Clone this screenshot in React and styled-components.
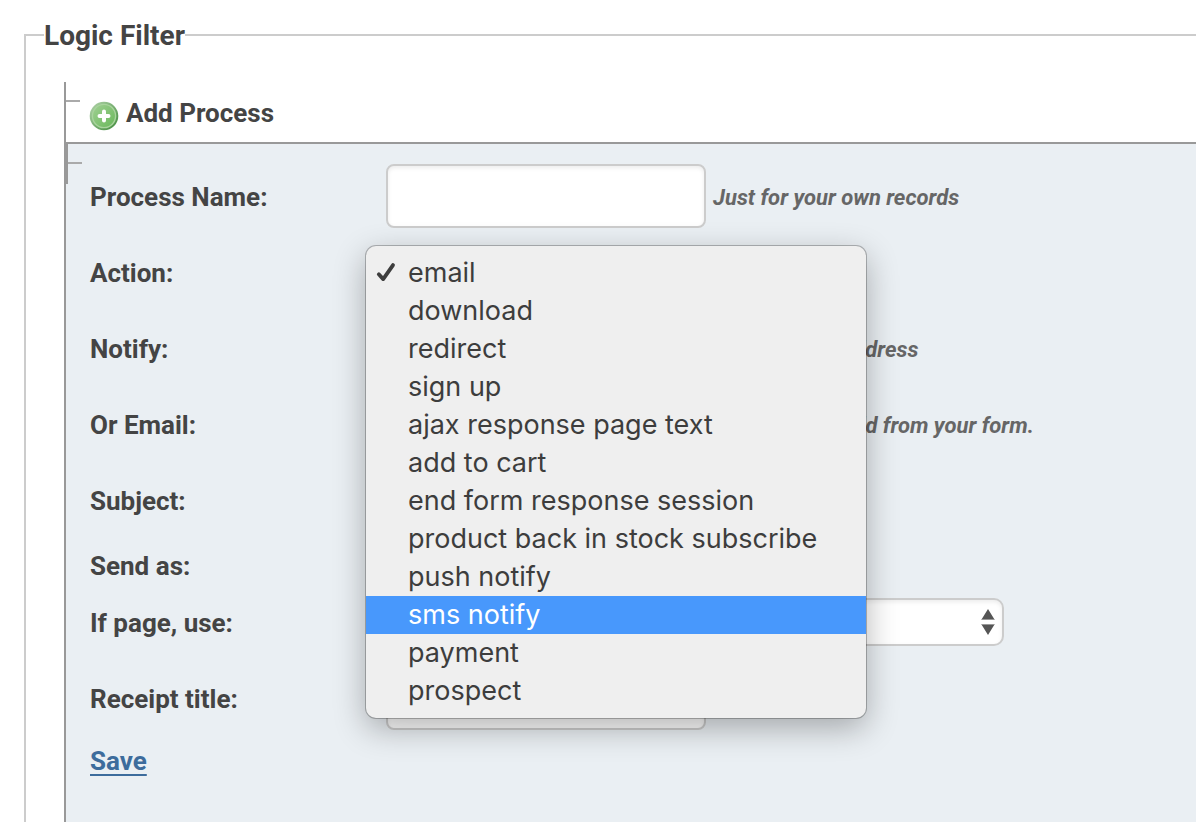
import { useState } from "react";
import styled, { createGlobalStyle } from "styled-components";

const actions = [
  "email",
  "download",
  "redirect",
  "sign up",
  "ajax response page text",
  "add to cart",
  "end form response session",
  "product back in stock subscribe",
  "push notify",
  "sms notify",
  "payment",
  "prospect",
];

const App = () => {
  const [action, setAction] = useState("email");
  const [active, setActive] = useState("sms notify");
  return (
    <Page>
      <GlobalStyle />
      <Filter>
        <Legend>Logic Filter</Legend>
        <Tree>
          <TreeHeader>
            <AddButton type="button">
              <AddIcon />
              Add Process
            </AddButton>
          </TreeHeader>
          <Panel>
            <Branch />
            <Row>
              <Label htmlFor="name">Process Name:</Label>
              <TextInput id="name" type="text" />
              <Hint>Just for your own records</Hint>
            </Row>
            <Row>
              <Label htmlFor="action">Action:</Label>
              <ActionField>
                <Select
                  id="action"
                  value={action}
                  onChange={(e) => setAction(e.target.value)}
                >
                  {actions.map((name) => (
                    <option key={name}>{name}</option>
                  ))}
                </Select>
                <Menu role="listbox" aria-label="Action">
                  {actions.map((name) => (
                    <MenuItem
                      key={name}
                      type="button"
                      role="option"
                      aria-selected={name === action}
                      $active={name === active}
                      onMouseEnter={() => setActive(name)}
                      onClick={() => setAction(name)}
                    >
                      <CheckSlot>{name === action && <CheckMark />}</CheckSlot>
                      {name}
                    </MenuItem>
                  ))}
                </Menu>
              </ActionField>
            </Row>
            <Row>
              <Label htmlFor="notify">Notify:</Label>
              <TextInput id="notify" type="text" />
              <Hint>Use an email address</Hint>
            </Row>
            <Row>
              <Label htmlFor="email">Or Email:</Label>
              <TextInput id="email" type="text" />
              <Hint>Or the email field from your form.</Hint>
            </Row>
            <Row>
              <Label htmlFor="subject">Subject:</Label>
              <TextInput id="subject" type="text" />
            </Row>
            <Row $size="small">
              <Label htmlFor="send">Send as:</Label>
              <input id="send" type="checkbox" />
            </Row>
            <Row $size="medium">
              <Label htmlFor="page">If page, use:</Label>
              <SelectField>
                <Select id="page" $wide />
                <Arrows />
              </SelectField>
            </Row>
            <Receipt>
              <Label htmlFor="receipt">Receipt title:</Label>
              <TextInput id="receipt" type="text" />
            </Receipt>
            <SaveLink href="#save">Save</SaveLink>
          </Panel>
        </Tree>
      </Filter>
    </Page>
  );
};

const AddIcon = () => (
  <svg width="30" height="30" viewBox="0 0 30 30" aria-hidden="true">
    <defs>
      <linearGradient id="ring" x1="0" y1="0" x2="1" y2="1">
        <stop offset="0" stopColor="#b4d5ac" />
        <stop offset="1" stopColor="#3f8a3a" />
      </linearGradient>
      <linearGradient id="disc" x1="0" y1="0" x2="1" y2="1">
        <stop offset="0" stopColor="#a0cf93" />
        <stop offset="1" stopColor="#69b85a" />
      </linearGradient>
    </defs>
    <circle cx="15" cy="15" r="14.3" fill="url(#ring)" />
    <circle cx="15" cy="15" r="11.6" fill="url(#disc)" stroke="#a9d49d" strokeWidth="1.4" />
    <path
      d="M15 10.5v9M10.5 15h9"
      stroke="#fff"
      strokeWidth="4"
      strokeLinecap="round"
    />
  </svg>
);

const CheckMark = () => (
  <svg width="20" height="20" viewBox="0 0 20 20" aria-hidden="true">
    <path
      d="M2.8 12.3L7.2 17.1L17 3.1"
      fill="none"
      stroke="#3d3d3d"
      strokeWidth="3.8"
      strokeLinecap="round"
      strokeLinejoin="round"
    />
  </svg>
);

const Arrows = () => (
  <ArrowsIcon width="14" height="26" viewBox="0 0 14 26" aria-hidden="true">
    <path d="M7 0L13.5 10.5H.5zM7 26L13.5 15.5H.5z" fill="#555" />
    <path d="M.5 10.5h13M.5 15.5h13" stroke="#999" />
  </ArrowsIcon>
);

const GlobalStyle = createGlobalStyle`
  * {
    box-sizing: border-box;
  }

  body {
    margin: 0;
    overflow-x: hidden;
    background: #fff;
    color: #444;
    font-family: Roboto, "Liberation Sans", sans-serif;
    font-size: 26px;
    font-weight: 700;
    line-height: 36px;
  }
`;

const Page = styled.main`
  display: flex;
  flex-direction: column;
  min-height: 100vh;
  padding-top: 16px;
`;

const Filter = styled.fieldset`
  display: flex;
  flex-direction: column;
  flex: 1;
  min-width: 0;
  margin: 0 0 0 24px;
  padding: 28px 0 0 38px;
  border: 2px solid #ccc;
  border-right: none;
  border-bottom: none;
`;

const Legend = styled.legend`
  margin-left: -20px;
  padding: 2px 0 0;
  font-size: 28px;
`;

const Tree = styled.div`
  display: flex;
  flex-direction: column;
  flex: 1;
  border-left: 2px solid #999;
`;

const TreeHeader = styled.div`
  display: flex;
  height: 60px;

  &::before {
    content: "";
    width: 14px;
    height: 2px;
    margin-top: 18px;
    background: #aaa;
  }
`;

const AddButton = styled.button`
  display: flex;
  align-items: center;
  gap: 7px;
  height: 62px;
  margin-left: 9px;
  padding: 0;
  border: none;
  background: none;
  color: inherit;
  font: inherit;
  cursor: pointer;

  svg {
    margin-top: 6px;
  }
`;

const Panel = styled.form`
  position: relative;
  flex: 1;
  padding: 14px 0 43px 24px;
  border-top: 2px solid #999;
  background: #eaeff3;
`;

const Branch = styled.span`
  position: absolute;
  top: 0;
  left: 0;
  width: 16px;
  height: 40px;
  border-left: 2px solid #999;

  &::after {
    content: "";
    display: block;
    height: 2px;
    margin-top: 18px;
    background: #aaa;
  }
`;

const rowHeights = { small: "54px", medium: "60px", large: "76px" };

const Row = styled.div`
  display: flex;
  align-items: center;
  height: ${({ $size }) => rowHeights[$size || "large"]};
`;

const Receipt = styled(Row)`
  margin-top: 8px;
`;

const Label = styled.label`
  flex: none;
  width: 296px;
  padding-top: 2px;
`;

const TextInput = styled.input`
  width: 320px;
  height: 64px;
  padding: 0 12px;
  border: 2px solid #ccc;
  border-radius: 8px;
  background: #fff;
  box-shadow: inset 0 2px 4px rgba(0, 0, 0, 0.08);
  font: inherit;
`;

const Hint = styled.em`
  margin-left: 7px;
  padding-top: 4px;
  color: #666;
  font-size: 22px;
  white-space: nowrap;
`;

const SelectField = styled.div`
  position: relative;
`;

const ActionField = styled(SelectField)`
  z-index: 1;
`;

const Select = styled.select`
  appearance: none;
  display: block;
  width: ${({ $wide }) => ($wide ? "618px" : "320px")};
  height: 48px;
  padding: 0 36px 0 12px;
  border: 2px solid #ccc;
  border-radius: 10px;
  background: #fff;
  box-shadow: inset 0 2px 4px rgba(0, 0, 0, 0.08);
  font: inherit;
`;

const ArrowsIcon = styled.svg`
  position: absolute;
  top: 11px;
  right: 9px;
  pointer-events: none;
`;

const Menu = styled.div`
  position: absolute;
  top: -2px;
  left: -20px;
  width: 500px;
  padding: 8px 0;
  border-radius: 10px;
  background: #efefef;
  box-shadow: 0 0 0 1px rgba(0, 0, 0, 0.25), 0 10px 32px rgba(0, 0, 0, 0.3);
`;

const MenuItem = styled.button`
  display: flex;
  align-items: center;
  width: 100%;
  height: 38px;
  padding: 0 0 2px 10px;
  border: none;
  background: ${({ $active }) => ($active ? "#4898fc" : "none")};
  color: ${({ $active }) => ($active ? "#fff" : "#3d3d3d")};
  font-family: Inter, "Liberation Sans", sans-serif;
  font-size: 27px;
  font-weight: 400;
  text-align: left;
  white-space: nowrap;
`;

const CheckSlot = styled.span`
  display: flex;
  width: 32px;
`;

const SaveLink = styled.a`
  display: inline-block;
  margin-top: 7px;
  color: #3d6c9c;
  text-decoration-thickness: 2px;
  text-underline-offset: 4px;
`;

export default App;
